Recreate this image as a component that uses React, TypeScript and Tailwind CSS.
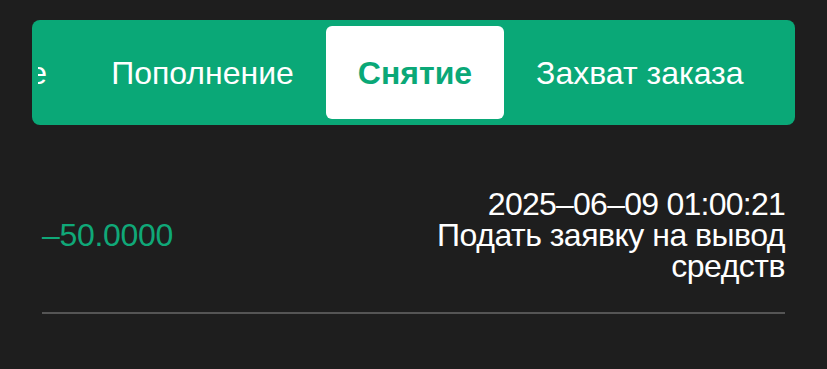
import React from 'react';

const tabs = ['Все', 'Пополнение', 'Снятие', 'Захват заказа'];

export default function App() {
  const active = 'Снятие';
  return (
    <div className="min-h-screen w-full bg-[#1e1e1e] font-['Liberation_Sans',Arial,sans-serif]">
      <div className="px-8 pt-5">
        <div className="h-[105px] rounded-[8px] bg-[#0aa877] p-[6px]">
          <div className="h-full overflow-hidden">
            <div className="ml-[-78px] flex h-full">
              {tabs.map((t) => (
                <div
                  key={t}
                  className={
                    t === active
                      ? 'flex h-full shrink-0 items-center rounded-[6px] bg-white px-8 text-[32px] font-bold text-[#0aa877]'
                      : 'flex h-full shrink-0 items-center px-8 text-[32px] text-white'
                  }
                >
                  {t}
                </div>
              ))}
            </div>
          </div>
        </div>

        <div className="mx-[10px] mt-[64px] flex items-center justify-between pb-[30px]">
          <div className="text-[32px] leading-[31px] tracking-[-0.3px] text-[#10a878]">–50.0000</div>
          <div className="w-[360px] text-right text-[32px] leading-[31px] tracking-[-0.5px] text-white">
            <div className="tracking-[-0.75px]">2025–06–09 01:00:21</div>
            <div>Подать заявку на вывод средств</div>
          </div>
        </div>
        <div className="mx-[10px] h-[2px] bg-[#555555]" />
      </div>
    </div>
  );
}
